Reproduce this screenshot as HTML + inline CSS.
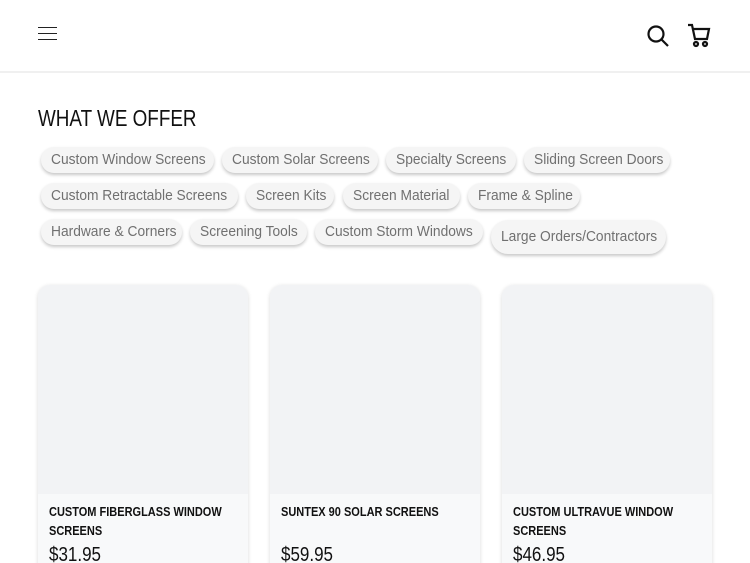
<!DOCTYPE html>
<html><head><meta charset="utf-8"><style>
*{margin:0;padding:0;box-sizing:border-box}
html,body{width:750px;height:563px;overflow:hidden}
body{background:#fff;font-family:"Liberation Sans",sans-serif;position:relative}
.hdr{position:absolute;left:0;top:0;width:750px;height:73px;border-bottom:2px solid #f0f0f0}
.ham{position:absolute;left:38px;top:27px;width:19px}
.ham i{display:block;height:1.3px;background:#222;margin-bottom:4.7px}
.sx{display:inline-block;transform-origin:left center;white-space:nowrap}
h1{position:absolute;left:38px;top:105px;font-size:23px;font-weight:normal;color:#111}
h1 .sx{transform:scaleX(0.82)}
.c{position:absolute;height:26px;border-radius:13px;background:#f5f5f5;box-shadow:0 2px 3px rgba(0,0,0,.22);color:#707070;font-size:14.5px;line-height:26px;white-space:nowrap;padding-left:10px;overflow:hidden}
.c .sx{transform:scaleX(0.95)}
.card{position:absolute;top:285px;width:210px;height:300px;border-radius:12px;overflow:hidden;background:#f8f9fa;box-shadow:0 1px 4px rgba(0,0,0,.15)}
.card .img{height:209px;background:#f2f3f5}
.card .t{position:absolute;left:11px;top:218px;width:230px;font-size:12.5px;font-weight:bold;line-height:19px;color:#111;transform:scaleX(0.88);transform-origin:left top}
.card .p{position:absolute;left:11px;top:259px;font-size:20px;color:#111;transform:scaleX(0.85);transform-origin:left top}
</style></head><body>
<div class="hdr">
<div class="ham"><i></i><i></i><i></i></div>
<svg style="position:absolute;left:646px;top:24px" width="24" height="24" viewBox="0 0 24 24" fill="none" stroke="#111" stroke-width="2.2"><circle cx="10" cy="10" r="7.5"/><path d="M15.5 15.5L22 22"/></svg>
<svg style="position:absolute;left:687px;top:23px" width="24" height="26" viewBox="0 0 24 26" fill="none" stroke="#111" stroke-width="2.2"><path d="M1 2h4l3 14h12l2-10H6"/><circle cx="9" cy="21" r="2"/><circle cx="18" cy="21" r="2"/></svg>
</div>
<h1><span class="sx">WHAT WE OFFER</span></h1>
<div class="c" style="left:41px;top:147px;width:173px"><span class="sx">Custom Window Screens</span></div>
<div class="c" style="left:222px;top:147px;width:156px"><span class="sx">Custom Solar Screens</span></div>
<div class="c" style="left:386px;top:147px;width:130px"><span class="sx">Specialty Screens</span></div>
<div class="c" style="left:524px;top:147px;width:146px"><span class="sx">Sliding Screen Doors</span></div>
<div class="c" style="left:41px;top:183px;width:197px"><span class="sx">Custom Retractable Screens</span></div>
<div class="c" style="left:246px;top:183px;width:88px"><span class="sx">Screen Kits</span></div>
<div class="c" style="left:343px;top:183px;width:117px"><span class="sx">Screen Material</span></div>
<div class="c" style="left:468px;top:183px;width:112px"><span class="sx">Frame &amp; Spline</span></div>
<div class="c" style="left:41px;top:219px;width:141px"><span class="sx">Hardware &amp; Corners</span></div>
<div class="c" style="left:190px;top:219px;width:117px"><span class="sx">Screening Tools</span></div>
<div class="c" style="left:315px;top:219px;width:168px"><span class="sx">Custom Storm Windows</span></div>
<div class="c" style="left:491px;top:220px;width:175px;height:34px;border-radius:17px;line-height:32px;padding-top:1px"><span class="sx">Large Orders/Contractors</span></div>
<div class="card" style="left:38px"><div class="img"></div><div class="t">CUSTOM FIBERGLASS WINDOW<br>SCREENS</div><div class="p">$31.95</div></div>
<div class="card" style="left:270px"><div class="img"></div><div class="t">SUNTEX 90 SOLAR SCREENS</div><div class="p">$59.95</div></div>
<div class="card" style="left:502px"><div class="img"></div><div class="t">CUSTOM ULTRAVUE WINDOW<br>SCREENS</div><div class="p">$46.95</div></div>
</body></html>
